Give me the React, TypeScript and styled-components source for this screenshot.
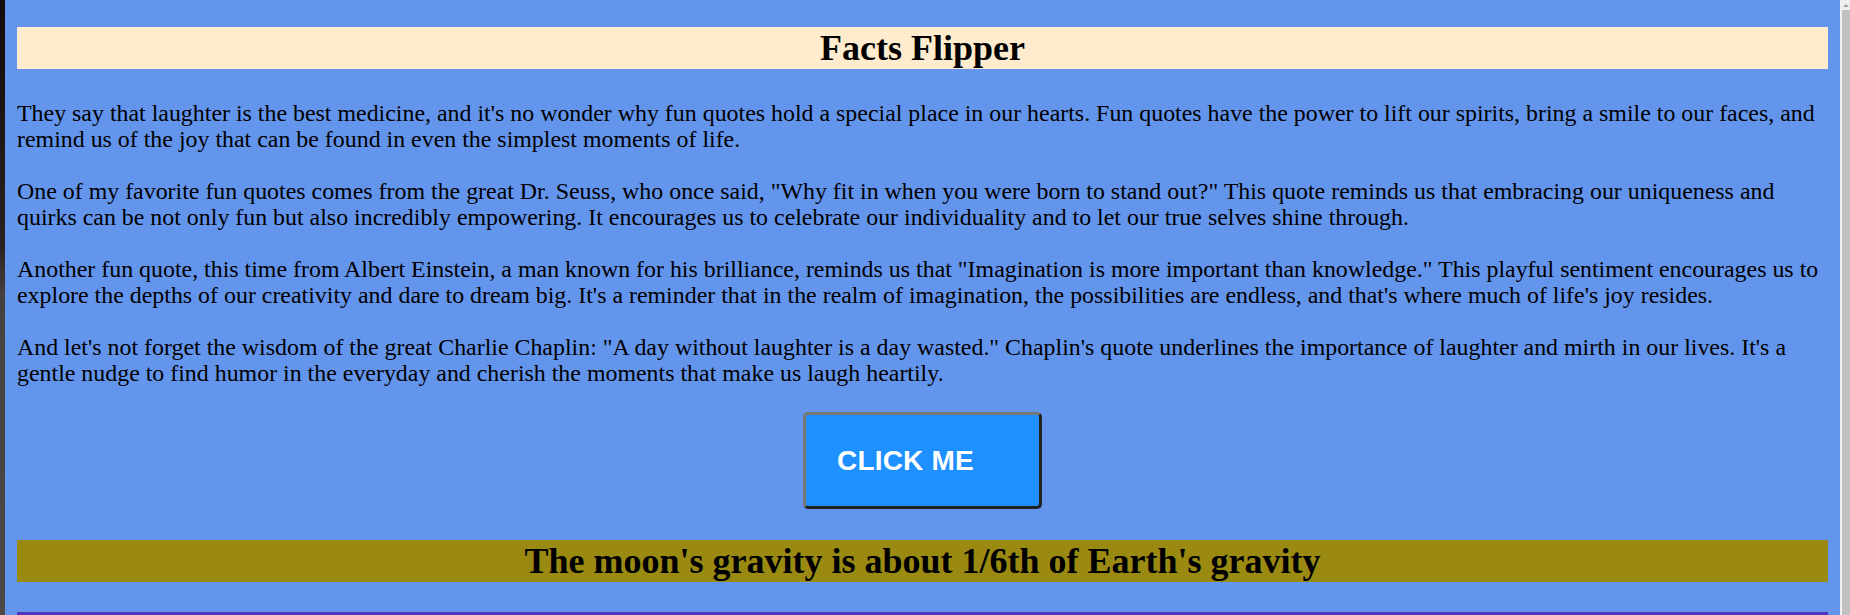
import styled, { createGlobalStyle } from 'styled-components';

const GlobalStyle = createGlobalStyle`
  html, body {
    margin: 0;
    padding: 0;
    height: 615px;
    overflow: hidden;
  }
  body {
    font-family: "Liberation Serif", "Times New Roman", serif;
  }
`;

const Frame = styled.div`
  display: flex;
  height: 615px;
`;

const EdgeStrip = styled.div`
  width: 5px;
  flex-shrink: 0;
  background: linear-gradient(to bottom, #140d0c 0%, #1a1110 12%, #2a2220 40%, #454140 48%, #4b4846 100%);
`;

const Page = styled.main`
  flex: 1;
  background: #6495ed;
  padding: 27px 12px 0;
  overflow: hidden;
`;

const ScrollBar = styled.div`
  width: 10px;
  flex-shrink: 0;
  display: flex;
  flex-direction: column;
  background: #f0f0f0;
  padding-left: 2px;
  box-sizing: border-box;
`;

const ScrollArrow = styled.div`
  height: 10px;
  display: flex;
  align-items: center;
  justify-content: center;

  &::before {
    content: '';
    border-left: 3px solid transparent;
    border-right: 3px solid transparent;
    border-bottom: 3px solid #a3a3a3;
  }
`;

const ScrollTrack = styled.div`
  flex: 1;
  background: #c1c1c1;
`;

const Banner = styled.h1<{ $bg: string }>`
  margin: 0;
  background: ${({ $bg }) => $bg};
  font-size: 36px;
  line-height: 42px;
  font-weight: bold;
  text-align: center;
  color: #000;
`;

const Content = styled.section`
  margin: 31px 0 0;
`;

const Paragraph = styled.p`
  margin: 0 0 26px;
  font-size: 23.9px;
  line-height: 26px;
  color: #000;
`;

const ButtonRow = styled.div`
  display: flex;
  justify-content: center;
  margin: 1px 0 31px;
`;

const FlipButton = styled.button`
  width: 239px;
  height: 97px;
  box-sizing: border-box;
  padding: 0 0 0 31px;
  text-align: left;
  background: #1e90ff;
  color: #fff;
  font-family: "Liberation Sans", Arial, sans-serif;
  font-weight: bold;
  font-size: 28px;
  letter-spacing: 0.2px;
  border: 3px solid;
  border-color: #777 #222 #222 #777;
  border-radius: 5px;
  cursor: pointer;
`;

const Footer = styled.div`
  margin-top: 30px;
  height: 10px;
  background: #5036bc;
`;

const paragraphs = [
  "They say that laughter is the best medicine, and it's no wonder why fun quotes hold a special place in our hearts. Fun quotes have the power to lift our spirits, bring a smile to our faces, and remind us of the joy that can be found in even the simplest moments of life.",
  'One of my favorite fun quotes comes from the great Dr. Seuss, who once said, "Why fit in when you were born to stand out?" This quote reminds us that embracing our uniqueness and quirks can be not only fun but also incredibly empowering. It encourages us to celebrate our individuality and to let our true selves shine through.',
  'Another fun quote, this time from Albert Einstein, a man known for his brilliance, reminds us that "Imagination is more important than knowledge." This playful sentiment encourages us to explore the depths of our creativity and dare to dream big. It\'s a reminder that in the realm of imagination, the possibilities are endless, and that\'s where much of life\'s joy resides.',
  'And let\'s not forget the wisdom of the great Charlie Chaplin: "A day without laughter is a day wasted." Chaplin\'s quote underlines the importance of laughter and mirth in our lives. It\'s a gentle nudge to find humor in the everyday and cherish the moments that make us laugh heartily.',
];

const App = () => {
  return (
    <>
      <GlobalStyle />
      <Frame>
        <EdgeStrip />
        <Page>
          <Banner $bg="#ffebcd">Facts Flipper</Banner>
          <Content>
            {paragraphs.map((text, i) => (
              <Paragraph key={i}>{text}</Paragraph>
            ))}
          </Content>
          <ButtonRow>
            <FlipButton>CLICK ME</FlipButton>
          </ButtonRow>
          <Banner $bg="#9a8a12">The moon's gravity is about 1/6th of Earth's gravity</Banner>
          <Footer />
        </Page>
        <ScrollBar>
          <ScrollArrow />
          <ScrollTrack />
        </ScrollBar>
      </Frame>
    </>
  );
};

export default App;
